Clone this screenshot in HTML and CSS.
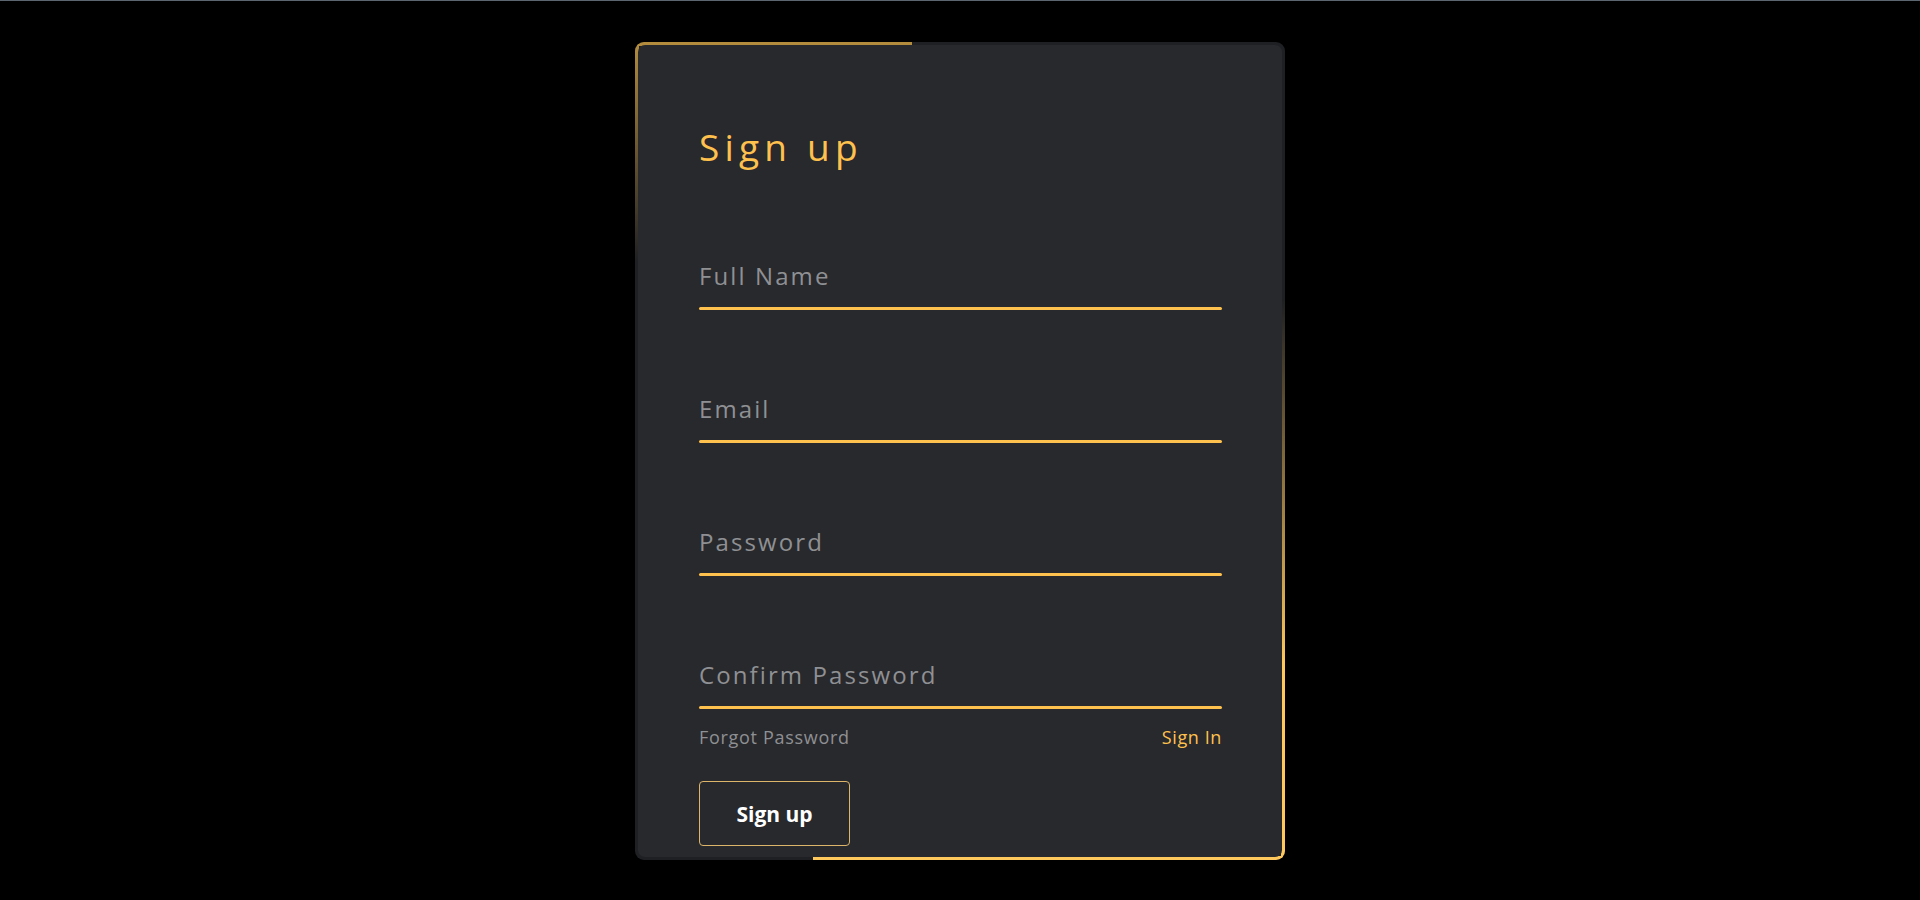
FILE: index.html
```html
<!DOCTYPE html>
<html lang="en">
<head>
<meta charset="utf-8">
<title>Sign up</title>
<link rel="stylesheet" href="styles.css">
</head>
<body>
<div class="page">
  <div class="card">
    <form class="form">
      <h2 class="title">Sign up</h2>
      <div class="field field-first">
        <span class="label">Full Name</span>
        <i class="line"></i>
      </div>
      <div class="field">
        <span class="label">Email</span>
        <i class="line"></i>
      </div>
      <div class="field">
        <span class="label">Password</span>
        <i class="line"></i>
      </div>
      <div class="field">
        <span class="label">Confirm Password</span>
        <i class="line"></i>
      </div>
      <div class="links">
        <a class="link-muted" href="#">Forgot Password</a>
        <a class="link-gold" href="#">Sign In</a>
      </div>
      <button class="btn" type="button">Sign up</button>
    </form>
  </div>
</div>
</body>
</html>
```
FILE: styles.css
```css
html, body {
  margin: 0;
  padding: 0;
  background: #000;
}
body {
  border-top: 1px solid #5b6670;
  height: 899px;
  overflow: hidden;
  font-family: "Open Sans", "Noto Sans", sans-serif;
}
.page {
  display: flex;
  justify-content: center;
  padding-top: 41px;
}
.card {
  position: relative;
  box-sizing: border-box;
  width: 650px;
  height: 818px;
  padding: 3px;
  border-radius: 9px;
  background: #1f2023;
  overflow: hidden;
}
.card::before {
  content: "";
  position: absolute;
  top: 0;
  left: 0;
  width: 277px;
  height: 220px;
  background:
    linear-gradient(#b38c3d, #b38c3d) 0 0 / 100% 4px no-repeat,
    linear-gradient(to bottom, #b38c3d, rgba(179, 140, 61, 0)) 0 0 / 4px 100% no-repeat;
}
.card::after {
  content: "";
  position: absolute;
  right: 0;
  bottom: 0;
  width: 472px;
  height: 560px;
  background:
    linear-gradient(#ffc85c, #ffc85c) 0 100% / 100% 4px no-repeat,
    linear-gradient(to top, #ffc85c 35%, rgba(255, 200, 92, 0)) 100% 0 / 4px 100% no-repeat;
}
.form {
  position: relative;
  z-index: 1;
  box-sizing: border-box;
  height: 100%;
  margin: 0;
  padding: 83px 60px 0 61px;
  border-radius: 7px;
  background: #28292d;
  display: flex;
  flex-direction: column;
}
.title {
  margin: 0;
  font-size: 37px;
  line-height: 1;
  font-weight: 500;
  letter-spacing: 5.2px;
  color: #ffc14d;
}
.field {
  display: flex;
  flex-direction: column;
  margin-top: 87px;
}
.field-first {
  margin-top: 99px;
}
.label {
  font-size: 24px;
  line-height: 24px;
  letter-spacing: 2.1px;
  color: #8f9093;
}
.line {
  display: block;
  height: 3px;
  margin-top: 19px;
  border-radius: 2px;
  background: #ffc14d;
}
.links {
  display: flex;
  justify-content: space-between;
  margin-top: 19px;
  font-size: 18px;
  line-height: 18px;
}
.links a {
  text-decoration: none;
}
.link-muted {
  color: #8f9093;
  letter-spacing: 0.7px;
}
.link-gold {
  color: #ffc14d;
  letter-spacing: 0.6px;
}
.btn {
  align-self: flex-start;
  margin-top: 35px;
  width: 151px;
  height: 65px;
  border: 1px solid #dcb56a;
  border-radius: 4px;
  background: transparent;
  color: #fff;
  font-family: "Open Sans", "Noto Sans", sans-serif;
  font-size: 21px;
  font-weight: 700;
  cursor: pointer;
}
```
